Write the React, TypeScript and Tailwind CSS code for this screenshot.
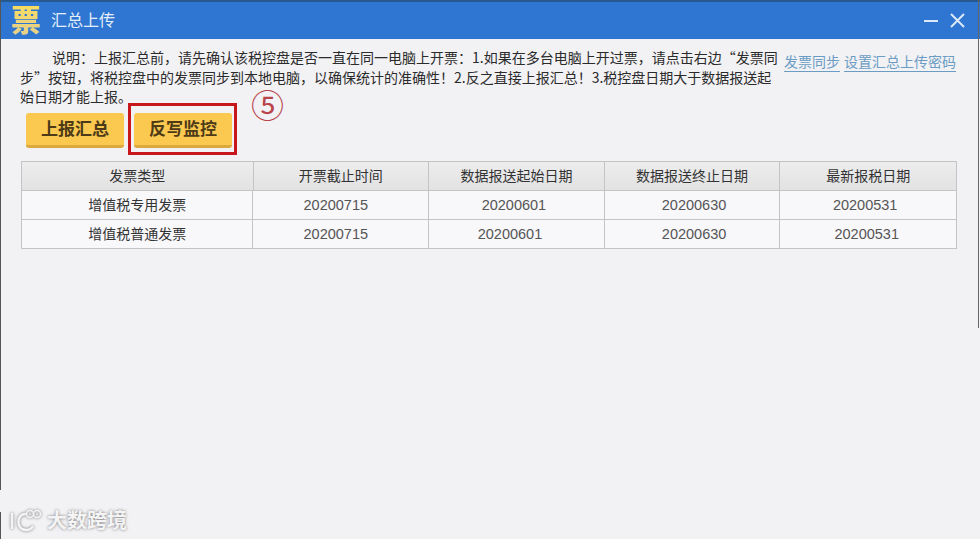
const cjk = "font-['Liberation_Sans','Noto_Sans_CJK_SC',sans-serif]"

const headers = ["发票类型", "开票截止时间", "数据报送起始日期", "数据报送终止日期", "最新报税日期"]
const rows = [
  ["增值税专用发票", "20200715", "20200601", "20200630", "20200531"],
  ["增值税普通发票", "20200715", "20200601", "20200630", "20200531"],
]
const colWidths = ["w-[231px]", "w-[176px]", "w-[176px]", "w-[176px]", "w-[177px]"]
// the dates don't sit quite centred in the picture
const nudges = [
  ["", "pr-[10px]", "pr-[5px]", "pl-[4px]", "pr-[6px]"],
  ["", "pr-[10px]", "pr-[13px]", "pl-[4px]", "pr-[3px]"],
]

function YellowButton({ label }: { label: string }) {
  return (
    <button className="w-[98px] h-[35px] pt-[3px] rounded-[3px] bg-[#fbc950] border-b-[3px] border-[#dcaa3c] text-[17px] font-bold text-[#4d3a17]">
      {label}
    </button>
  )
}

export default function App() {
  return (
    <div className={`relative w-[980px] h-[539px] overflow-hidden bg-[#f2f1f4] ${cjk}`}>
      {/* title bar */}
      <div className="h-[39px] flex items-center bg-[#2f76d2] border-t-2 border-[#27598f]">
        <div className="w-[30px] ml-[11px] text-[30px] leading-none font-black text-center text-transparent bg-clip-text bg-gradient-to-b from-[#f7dc5e] to-[#e6cf8c]">票</div>
        <div className="ml-[10px] text-[16px] text-[#e4effb]">汇总上传</div>
        <div className="ml-auto mr-[15px] flex items-center gap-[12px]">
          <svg width="14" height="14" viewBox="0 0 14 14"><path d="M0 7h14" stroke="#dbe8f8" strokeWidth="2" /></svg>
          <svg width="15" height="15" viewBox="0 0 15 15"><path d="M1 1l13 13M14 1L1 14" stroke="#dbe8f8" strokeWidth="2" /></svg>
        </div>
      </div>

      {/* notice and links */}
      <div className="flex pl-[20px] pt-[9px]">
        <div className="w-[764px] text-[14px] leading-[19.5px] text-[#2b2b2b] font-['Noto_Sans_CJK_SC',sans-serif]">
          <div className="pl-[32px] whitespace-nowrap">说明：上报汇总前，请先确认该税控盘是否一直在同一电脑上开票：1.如果在多台电脑上开过票，请点击右边“发票同</div>
          <div className="whitespace-nowrap">步”按钮，将税控盘中的发票同步到本地电脑，以确保统计的准确性！2.反之直接上报汇总！3.税控盘日期大于数据报送起</div>
          <div className="w-fit whitespace-nowrap">始日期才能上报。</div>
        </div>
        <div className="flex gap-[4px] pt-[6px] text-[14px] leading-[17px] text-[#6a9cc4]">
          <span className="border-b border-[#6a9cc4] h-[18px]">发票同步</span>
          <span className="border-b border-[#6a9cc4] h-[18px]">设置汇总上传密码</span>
        </div>
      </div>

      {/* buttons */}
      <div className="relative flex gap-[10px] pl-[26px] pt-[6px]">
        <YellowButton label="上报汇总" />
        <YellowButton label="反写监控" />
        <div className="absolute left-[128px] top-[-4px] w-[109px] h-[52px] border-[3px] border-[#c8161d]" />
        <div className="absolute left-[251px] top-[-19px] text-[33px] leading-none text-[#b9444c] font-['Noto_Sans_CJK_SC',sans-serif]">⑤</div>
      </div>

      {/* table */}
      <div className="ml-[21px] mt-[13px] w-[936px] border border-[#c4c4c6] text-[14px] text-[#333]">
        <div className="flex h-[29px] bg-gradient-to-b from-[#ededee] to-[#e2e2e3] border-b border-[#c4c4c6]">
          {headers.map((h, i) => (
            <div key={h} className={`${colWidths[i]} flex items-center justify-center pt-[2px] ${i ? "border-l border-[#c4c4c6]" : ""}`}>{h}</div>
          ))}
        </div>
        {rows.map((row, r) => (
          <div key={row[0]} className={`flex bg-[#f8f7fa] ${r === 0 ? "h-[29px] border-b border-[#c4c4c6]" : "h-[28px]"}`}>
            {row.map((c, i) => (
              <div key={i} className={`${colWidths[i]} flex items-center justify-center pt-[2px] ${nudges[r][i]} ${i ? "border-l border-[#c4c4c6] text-[#555] text-[14.5px]" : ""}`}>{c}</div>
            ))}
          </div>
        ))}
      </div>

      {/* window edges */}
      <div className="absolute left-0 top-0 w-[1px] h-[490px] bg-[#555]" />
      <div className="absolute left-0 top-[512px] w-[1px] h-[27px] bg-[#555]" />
      <div className="absolute right-[1px] top-0 w-[1px] h-[328px] bg-[#666]" />

      {/* watermark */}
      <div className="absolute left-[10px] bottom-[6px] flex items-center gap-[4px] text-[#f4f4f5] [text-shadow:0_0_3px_#77777a]">
        <svg width="33" height="24" viewBox="0 0 33 24" fill="none" stroke="#f4f4f5" strokeWidth="2.5" className="drop-shadow-[0_0_1.5px_#77777a]">
          <path d="M2 4v16" />
          <path d="M16 5c-9-1-11 15 0 16 4 0 6-2 7-4" />
          <circle cx="20" cy="5" r="3.5" strokeWidth="1.5" />
          <circle cx="27" cy="5" r="3.5" strokeWidth="1.5" />
        </svg>
        <span className="text-[20px] leading-none font-bold">大数跨境</span>
      </div>
    </div>
  )
}
